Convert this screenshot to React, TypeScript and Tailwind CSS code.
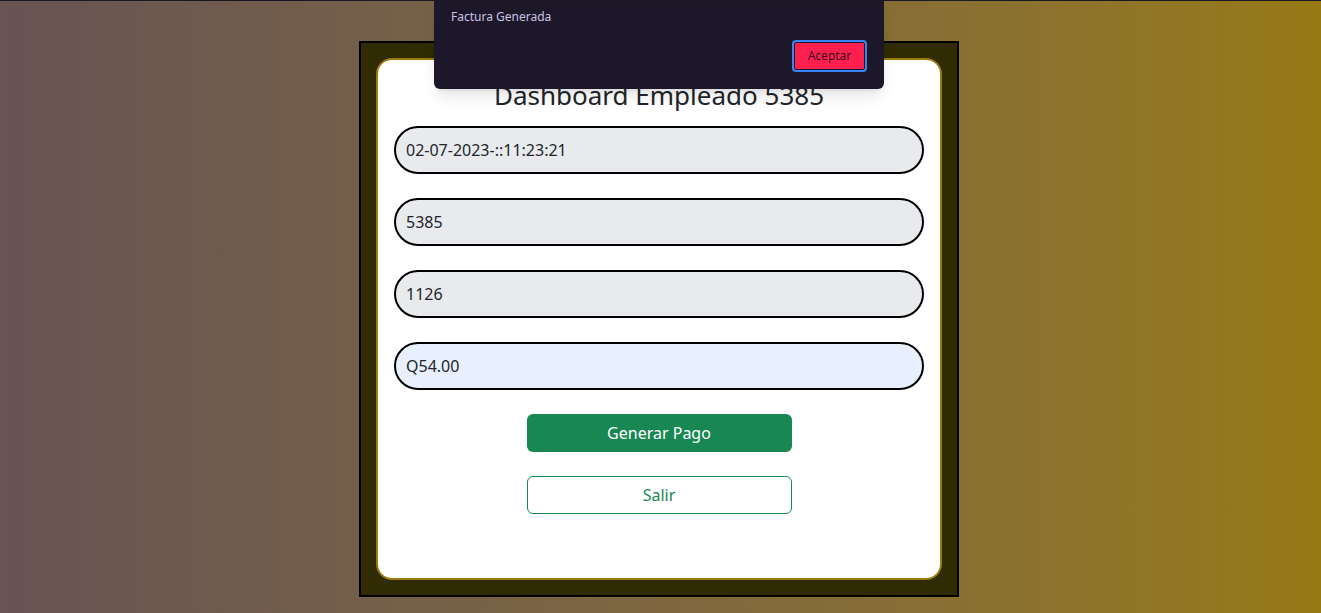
import React from 'react'

const fields = [
  { value: '02-07-2023-::11:23:21', bg: 'bg-[#e8eaed]' },
  { value: '5385', bg: 'bg-[#e8eaed]' },
  { value: '1126', bg: 'bg-[#e8eaed]' },
  { value: 'Q54.00', bg: 'bg-[#e8f0fe]' },
]

function Alerta() {
  return (
    <div className="absolute left-[434px] top-0 w-[450px] h-[88px] bg-[#1c1829] rounded-b-md shadow-lg px-[17px] pt-[8px]">
      <p className="text-[12px] leading-[16px] text-[#cbc3e3]">Factura Generada</p>
      <div className="flex justify-end mt-[15px]">
        <button className="w-[75px] h-[32px] rounded-[4px] bg-[#ff1f4f] border-2 border-[#3b82f6] ring-1 ring-inset ring-[#1c1829] text-[12px] text-[#3a0f1f]">
          Aceptar
        </button>
      </div>
    </div>
  )
}

export default function App() {
  return (
    <div
      className="relative min-h-[613px] border-t border-[#1b1825] bg-gradient-to-r from-[#675453] to-[#977a14]"
      style={{ fontFamily: '"Noto Sans", "Open Sans", sans-serif' }}
    >
      <div className="pt-[40px] pr-[3px] flex justify-center">
        <div className="w-[600px] h-[556px] border-2 border-black bg-[#312b03] p-[15px]">
          <div className="h-full bg-white border-2 border-[#9a7c10] rounded-[16px] px-[16px] pt-[20px]">
            <h1 className="text-center text-[26px] leading-[31px] text-[#212529] mb-[15px]">Dashboard Empleado 5385</h1>
            <div className="flex flex-col gap-[24px]">
              {fields.map((f) => (
                <div
                  key={f.value}
                  className={`h-[48px] rounded-full border-2 border-black ${f.bg} flex items-center px-[10px] text-[16px] text-[#212529]`}
                >
                  {f.value}
                </div>
              ))}
            </div>
            <div className="flex flex-col items-center gap-[24px] mt-[24px]">
              <button className="w-[265px] h-[38px] rounded-[6px] bg-[#198754] text-white text-[16px]">Generar Pago</button>
              <button className="w-[265px] h-[38px] rounded-[6px] border border-[#198754] text-[#198754] text-[16px] bg-white">Salir</button>
            </div>
          </div>
        </div>
      </div>
      <Alerta />
    </div>
  )
}
